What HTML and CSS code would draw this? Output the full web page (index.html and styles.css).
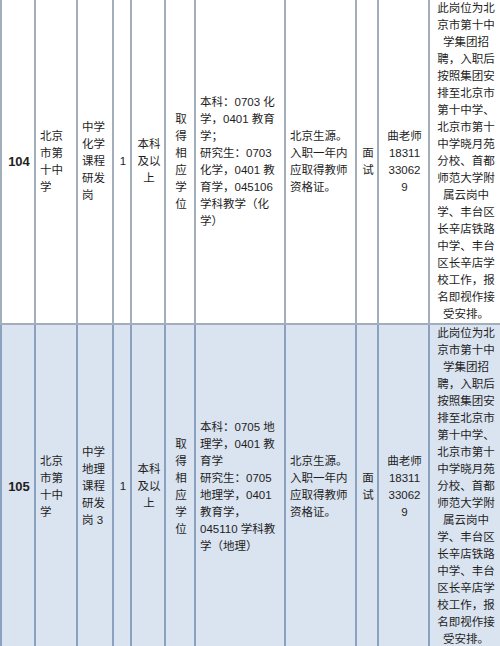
FILE: index.html
```html
<!DOCTYPE html>
<html lang="zh">
<head>
<meta charset="utf-8">
<title>招聘岗位表</title>
<link rel="stylesheet" href="styles.css">
</head>
<body>
<table class="jobs">
  <colgroup>
    <col class="c-no"><col class="c-school"><col class="c-post"><col class="c-count"><col class="c-edu"><col class="c-degree"><col class="c-major"><col class="c-other"><col class="c-exam"><col class="c-contact"><col class="c-note">
  </colgroup>
  <tbody>
    <tr class="row row-a">
      <td class="center num">104</td>
      <td class="left">北京<br>市第<br>十中<br>学</td>
      <td class="left">中学<br>化学<br>课程<br>研发<br>岗</td>
      <td class="center">1</td>
      <td class="center">本科<br>及以<br>上</td>
      <td class="center">取<br>得<br>相<br>应<br>学<br>位</td>
      <td class="left">本科：0703 化<br>学，0401 教育<br>学；<br>研究生：0703<br>化学，0401 教<br>育学，045106<br>学科教学（化<br>学）</td>
      <td class="left">北京生源。<br>入职一年内<br>应取得教师<br>资格证。</td>
      <td class="center">面<br>试</td>
      <td class="center">曲老师<br>18311<br>33062<br>9</td>
      <td class="center">此岗位为北<br>京市第十中<br>学集团招<br>聘，入职后<br>按照集团安<br>排至北京市<br>第十中学、<br>北京市第十<br>中学晓月苑<br>分校、首都<br>师范大学附<br>属云岗中<br>学、丰台区<br>长辛店铁路<br>中学、丰台<br>区长辛店学<br>校工作，报<br>名即视作接<br>受安排。</td>
    </tr>
    <tr class="row row-b">
      <td class="center num">105</td>
      <td class="left">北京<br>市第<br>十中<br>学</td>
      <td class="left">中学<br>地理<br>课程<br>研发<br>岗 3</td>
      <td class="center">1</td>
      <td class="center">本科<br>及以<br>上</td>
      <td class="center">取<br>得<br>相<br>应<br>学<br>位</td>
      <td class="left">本科：0705 地<br>理学，0401 教<br>育学<br>研究生：0705<br>地理学，0401<br>教育学，<br>045110 学科教<br>学（地理）</td>
      <td class="left">北京生源。<br>入职一年内<br>应取得教师<br>资格证。</td>
      <td class="center">面<br>试</td>
      <td class="center">曲老师<br>18311<br>33062<br>9</td>
      <td class="center">此岗位为北<br>京市第十中<br>学集团招<br>聘，入职后<br>按照集团安<br>排至北京市<br>第十中学、<br>北京市第十<br>中学晓月苑<br>分校、首都<br>师范大学附<br>属云岗中<br>学、丰台区<br>长辛店铁路<br>中学、丰台<br>区长辛店学<br>校工作，报<br>名即视作接<br>受安排。</td>
    </tr>
  </tbody>
</table>
</body>
</html>
```

FILE: styles.css
```css
html, body {
  margin: 0;
  padding: 0;
  background: #ffffff;
}

body {
  width: 500px;
  height: 646px;
  overflow: hidden;
  font-family: "Liberation Sans", "Noto Sans CJK SC", sans-serif;
  font-size: 11.5px;
  line-height: 17px;
  color: #1e1e1e;
}

.jobs {
  width: 500px;
  margin-top: -2px;
  border-collapse: collapse;
  table-layout: fixed;
}

.c-no { width: 34px; }
.c-school { width: 42px; }
.c-post { width: 36px; }
.c-count { width: 18px; }
.c-edu { width: 34px; }
.c-degree { width: 30px; }
.c-major { width: 90px; }
.c-other { width: 71px; }
.c-exam { width: 22px; }
.c-contact { width: 51px; }
.c-note { width: 72px; }

.jobs td {
  border: 2px solid #8c9fb4;
  vertical-align: middle;
  padding: 0 2px 0 4px;
  overflow: hidden;
  white-space: nowrap;
}

.row-a { height: 325px; }
.row-b { height: 322px; }

.row-a td {
  background: #ffffff;
  border-color: #a3aebb;
}

.row-b td {
  background: #dae3f0;
  border-color: #8aa2bf;
  border-top-color: #8697aa;
}

.left { text-align: left; }

.center {
  text-align: center;
  padding: 0 1px;
}

.num {
  font-weight: bold;
  font-size: 13px;
}
```
